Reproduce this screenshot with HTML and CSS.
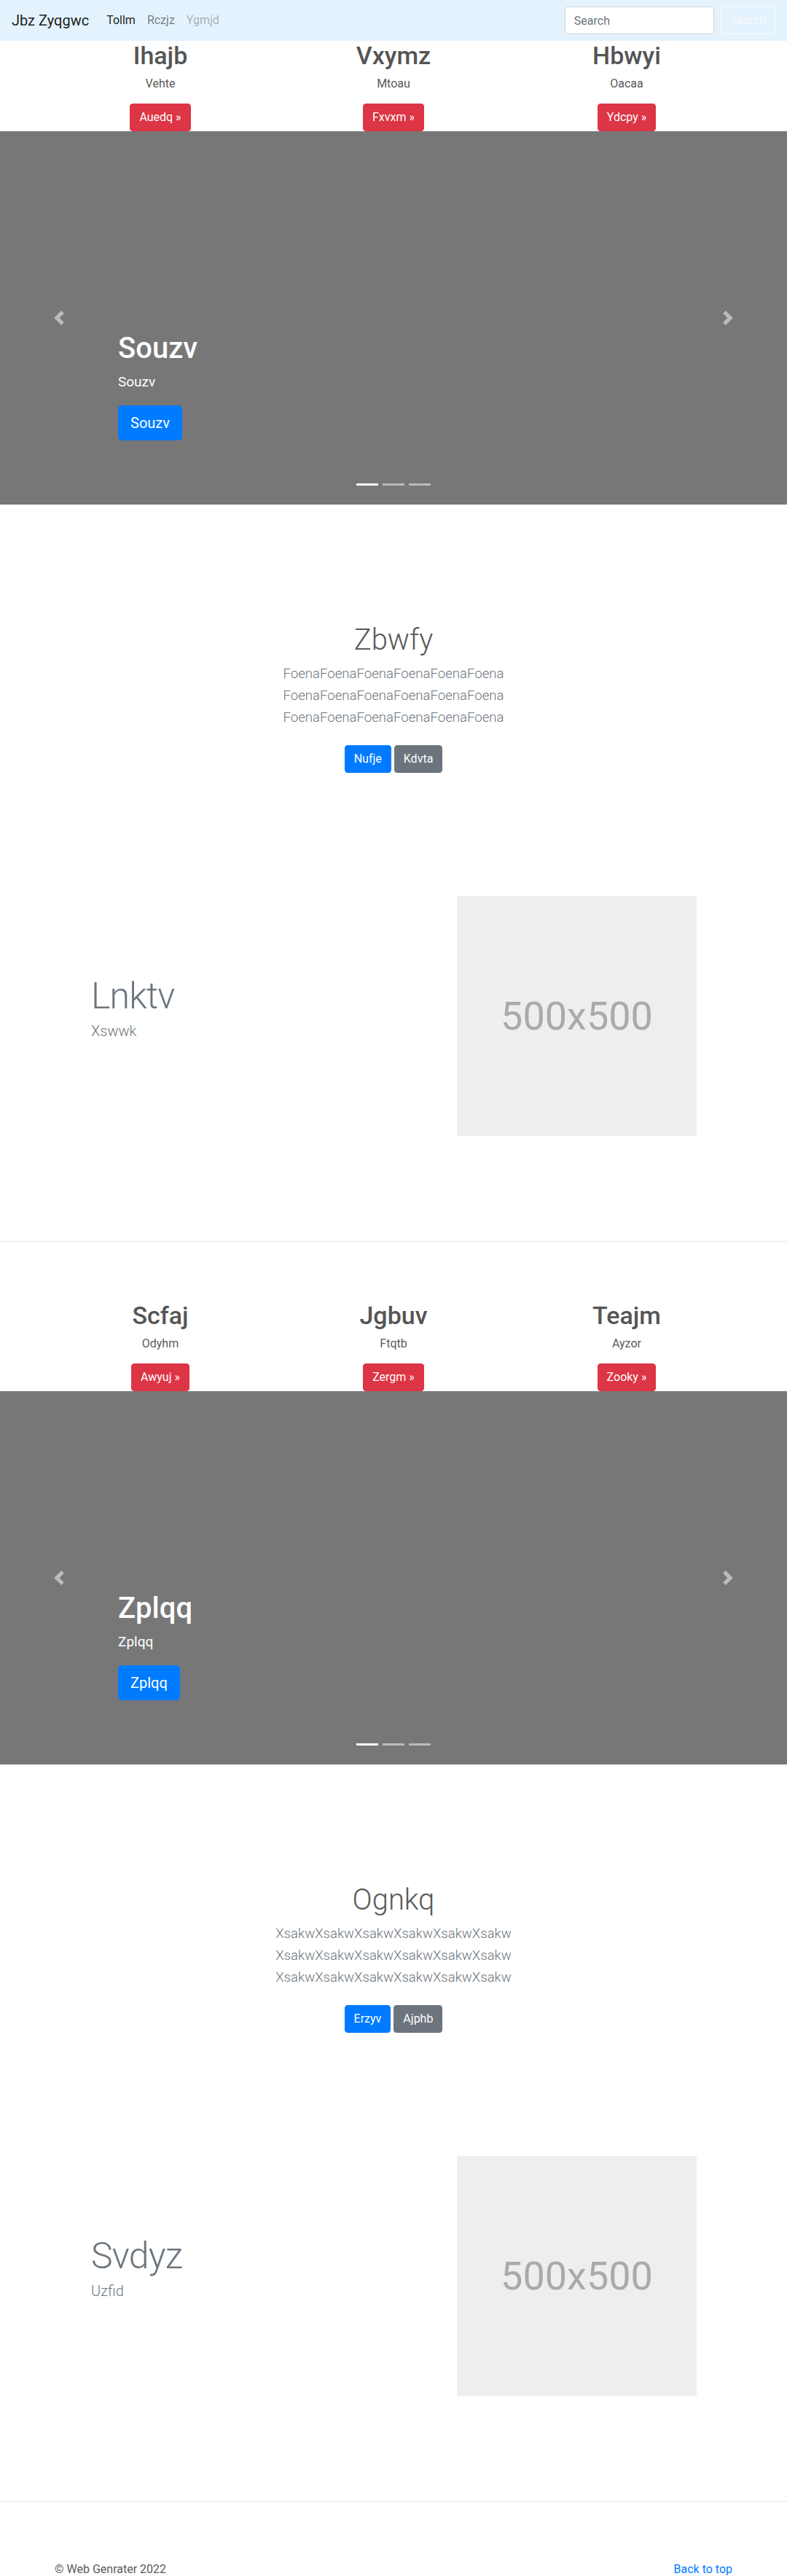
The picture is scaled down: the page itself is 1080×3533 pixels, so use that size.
FILE: index.html
```html
<!DOCTYPE html>
<html lang="en">
<head>
<meta charset="utf-8">
<title>Jbz Zyqgwc</title>
<link rel="stylesheet" href="styles.css">
</head>
<body>
<nav class="navbar">
  <a class="brand" href="#">Jbz Zyqgwc</a>
  <ul class="nav-links">
    <li><a class="nav-link active" href="#">Tollm</a></li>
    <li><a class="nav-link" href="#">Rczjz</a></li>
    <li><a class="nav-link disabled" href="#">Ygmjd</a></li>
  </ul>
  <form class="search">
    <input class="search-input" type="text" placeholder="Search">
    <button class="search-btn" type="button">Search</button>
  </form>
</nav>

<main>
  <div class="block">
    <section class="marketing">
      <div class="card">
        <h2 class="card-title">Ihajb</h2>
        <p class="card-text">Vehte</p>
        <a class="btn btn-danger" href="#">Auedq &raquo;</a>
      </div>
      <div class="card">
        <h2 class="card-title">Vxymz</h2>
        <p class="card-text">Mtoau</p>
        <a class="btn btn-danger" href="#">Fxvxm &raquo;</a>
      </div>
      <div class="card">
        <h2 class="card-title">Hbwyi</h2>
        <p class="card-text">Oacaa</p>
        <a class="btn btn-danger" href="#">Ydcpy &raquo;</a>
      </div>
    </section>

    <div class="carousel">
      <a class="control control-prev" href="#"><svg class="chev" viewBox="0 0 8 8"><path d="M5.25 0l-4 4 4 4 1.5-1.5-2.5-2.5 2.5-2.5-1.5-1.5z"/></svg></a>
      <a class="control control-next" href="#"><svg class="chev" viewBox="0 0 8 8"><path d="M2.75 0l-1.5 1.5 2.5 2.5-2.5 2.5 1.5 1.5 4-4-4-4z"/></svg></a>
      <div class="caption">
        <h1 class="caption-title">Souzv</h1>
        <p class="caption-text">Souzv</p>
        <a class="btn btn-lg btn-primary" href="#">Souzv</a>
      </div>
      <ol class="indicators">
        <li class="active"></li>
        <li></li>
        <li></li>
      </ol>
    </div>

    <section class="jumbo">
      <h1 class="jumbo-title">Zbwfy</h1>
      <p class="lead-lines">FoenaFoenaFoenaFoenaFoenaFoena FoenaFoenaFoenaFoenaFoenaFoena FoenaFoenaFoenaFoenaFoenaFoena</p>
      <div class="jumbo-actions">
        <a class="btn btn-primary" href="#">Nufje</a>
        <a class="btn btn-secondary" href="#">Kdvta</a>
      </div>
    </section>

    <div class="featurette">
      <div class="feat-text">
        <h2 class="feat-title">Lnktv</h2>
        <p class="feat-lead">Xswwk</p>
      </div>
      <div class="placeholder">500x500</div>
    </div>

    <hr class="divider">
  </div>

  <div class="block">
    <section class="marketing">
      <div class="card">
        <h2 class="card-title">Scfaj</h2>
        <p class="card-text">Odyhm</p>
        <a class="btn btn-danger" href="#">Awyuj &raquo;</a>
      </div>
      <div class="card">
        <h2 class="card-title">Jgbuv</h2>
        <p class="card-text">Ftqtb</p>
        <a class="btn btn-danger" href="#">Zergm &raquo;</a>
      </div>
      <div class="card">
        <h2 class="card-title">Teajm</h2>
        <p class="card-text">Ayzor</p>
        <a class="btn btn-danger" href="#">Zooky &raquo;</a>
      </div>
    </section>

    <div class="carousel">
      <a class="control control-prev" href="#"><svg class="chev" viewBox="0 0 8 8"><path d="M5.25 0l-4 4 4 4 1.5-1.5-2.5-2.5 2.5-2.5-1.5-1.5z"/></svg></a>
      <a class="control control-next" href="#"><svg class="chev" viewBox="0 0 8 8"><path d="M2.75 0l-1.5 1.5 2.5 2.5-2.5 2.5 1.5 1.5 4-4-4-4z"/></svg></a>
      <div class="caption">
        <h1 class="caption-title">Zplqq</h1>
        <p class="caption-text">Zplqq</p>
        <a class="btn btn-lg btn-primary" href="#">Zplqq</a>
      </div>
      <ol class="indicators">
        <li class="active"></li>
        <li></li>
        <li></li>
      </ol>
    </div>

    <section class="jumbo">
      <h1 class="jumbo-title">Ognkq</h1>
      <p class="lead-lines">XsakwXsakwXsakwXsakwXsakwXsakw XsakwXsakwXsakwXsakwXsakwXsakw XsakwXsakwXsakwXsakwXsakwXsakw</p>
      <div class="jumbo-actions">
        <a class="btn btn-primary" href="#">Erzyv</a>
        <a class="btn btn-secondary" href="#">Ajphb</a>
      </div>
    </section>

    <div class="featurette">
      <div class="feat-text">
        <h2 class="feat-title">Svdyz</h2>
        <p class="feat-lead">Uzfid</p>
      </div>
      <div class="placeholder">500x500</div>
    </div>

    <hr class="divider">
  </div>
</main>

<footer class="footer">
  <p class="copy">&copy; Web Genrater 2022</p>
  <p><a class="top-link" href="#">Back to top</a></p>
</footer>
</body>
</html>
```

FILE: styles.css
```css
html, body {
  margin: 0;
  padding: 0;
}

body {
  font-family: Roboto, "Open Sans", "Liberation Sans", sans-serif;
  font-size: 16px;
  line-height: 1.5;
  color: #5a5a5a;
  background: #fff;
}

/* Navbar */
.navbar {
  display: flex;
  align-items: center;
  height: 56px;
  box-sizing: border-box;
  padding: 8px 16px;
  background: #e3f2fd;
}

.brand {
  font-size: 20px;
  line-height: 30px;
  color: rgba(0, 0, 0, 0.9);
  text-decoration: none;
  margin-right: 16px;
}

.nav-links {
  display: flex;
  flex: 1;
  list-style: none;
  margin: 0;
  padding: 0;
}

.nav-link {
  display: block;
  padding: 8px;
  line-height: 24px;
  color: rgba(0, 0, 0, 0.5);
  text-decoration: none;
}

.nav-link.active {
  color: rgba(0, 0, 0, 0.9);
}

.nav-link.disabled {
  color: rgba(0, 0, 0, 0.3);
}

.search {
  display: flex;
  align-items: center;
  margin: 0;
}

.search-input {
  width: 205px;
  height: 38px;
  box-sizing: border-box;
  padding: 6px 12px;
  border: 1px solid #ced4da;
  border-radius: 4px;
  font-family: inherit;
  font-size: 16px;
  line-height: 24px;
  color: #495057;
  background: #fff;
  margin-right: 9px;
}

.search-input::placeholder {
  color: #6c757d;
}

.search-btn {
  height: 38px;
  box-sizing: border-box;
  padding: 6px 12px;
  border: 1px solid #f8f9fa;
  border-radius: 4px;
  background: transparent;
  color: #f8f9fa;
  font-family: inherit;
  font-size: 16px;
  line-height: 24px;
}

/* Marketing cards */
.marketing {
  width: 960px;
  margin: 0 auto;
  display: grid;
  grid-template-columns: repeat(3, 1fr);
}

.card {
  display: flex;
  flex-direction: column;
  align-items: center;
  text-align: center;
}

.card-title {
  font-size: 34px;
  line-height: 40.8px;
  font-weight: 500;
  margin: 0 0 6px;
  color: #555;
}

.card-text {
  margin: 0 0 15px;
  color: #5a5a5a;
}

/* Buttons */
.btn {
  display: inline-block;
  box-sizing: border-box;
  padding: 6px 12px;
  font-size: 16px;
  line-height: 24px;
  border: 1px solid transparent;
  border-radius: 4px;
  color: #fff;
  text-decoration: none;
  white-space: nowrap;
}

.btn-lg {
  padding: 8px 16px;
  font-size: 20px;
  line-height: 30px;
  border-radius: 5px;
}

.btn-danger {
  background: #dc3545;
  border-color: #dc3545;
}

.btn-primary {
  background: #007bff;
  border-color: #007bff;
}

.btn-secondary {
  background: #6c757d;
  border-color: #6c757d;
}

/* Carousel */
.carousel {
  position: relative;
  height: 512px;
  background: #777;
  overflow: hidden;
}

.control {
  position: absolute;
  top: 0;
  bottom: 0;
  width: 15%;
  display: flex;
  align-items: center;
  justify-content: center;
}

.control-prev {
  left: 0;
}

.control-next {
  right: 0;
}

.chev {
  width: 20px;
  height: 20px;
  fill: #fff;
  opacity: 0.5;
}

.caption {
  position: absolute;
  top: 274px;
  left: 15%;
  right: 15%;
  color: #fff;
  text-align: left;
}

.caption-title {
  font-size: 40px;
  line-height: 48px;
  font-weight: 500;
  margin: 0 0 8px;
}

.caption-text {
  font-size: 19px;
  line-height: 28.5px;
  margin: 0 0 17.5px;
}

.indicators {
  position: absolute;
  left: 0;
  right: 0;
  bottom: 26px;
  display: flex;
  justify-content: center;
  list-style: none;
  margin: 0;
  padding: 0;
}

.indicators li {
  width: 30px;
  height: 3px;
  margin: 0 3px;
  background: rgba(255, 255, 255, 0.5);
}

.indicators li.active {
  background: #fff;
}

/* Jumbotron-like section */
.jumbo {
  padding-top: 162px;
  text-align: center;
}

.jumbo-title {
  font-size: 40px;
  line-height: 48px;
  font-weight: 300;
  margin: 0 0 7px;
  color: #5a5a5a;
}

.lead-lines {
  width: 450px;
  margin: 0 auto 23px;
  font-size: 18.6px;
  line-height: 30px;
  font-weight: 300;
  color: #6c757d;
}

.jumbo-actions {
  display: flex;
  justify-content: center;
  gap: 4px;
}

/* Featurette */
.featurette {
  width: 831px;
  margin: 169px 0 0 125px;
  display: flex;
  align-items: center;
  justify-content: space-between;
}

.feat-title {
  font-size: 50px;
  line-height: 1;
  font-weight: 300;
  letter-spacing: -0.8px;
  margin: 0 0 8px;
  color: #6c757d;
}

.feat-lead {
  font-size: 20px;
  line-height: 30px;
  font-weight: 300;
  margin: 0 0 16px;
  color: #6c757d;
}

.placeholder {
  width: 329px;
  height: 329px;
  background: #eee;
  color: #aaa;
  display: flex;
  align-items: center;
  justify-content: center;
  font-size: 54px;
}

.divider {
  height: 0;
  margin: 144px 0 81px;
  border: 0;
  border-top: 1px solid rgba(0, 0, 0, 0.1);
}

/* Footer */
.footer {
  width: 960px;
  margin: 0 auto;
  padding: 0 15px;
  box-sizing: border-box;
  display: flex;
  justify-content: space-between;
}

.footer p {
  margin: 0 0 16px;
}

.top-link {
  color: #007bff;
  text-decoration: none;
}
```
